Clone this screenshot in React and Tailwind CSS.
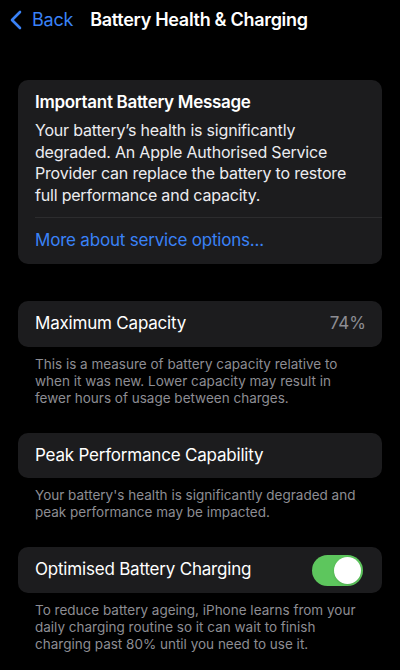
const Card = ({ children, className = '' }) => (
  <div className={`mx-[18px] rounded-[10px] bg-[#1c1c1e] ${className}`}>{children}</div>
);

const Footer = ({ children }) => (
  <p className="mx-[35px] mt-[9px] pr-1 text-[13.5px] leading-[17px] text-[#8d8d93]">{children}</p>
);

export default function App() {
  return (
    <div
      className="w-[400px] h-[670px] overflow-hidden bg-black text-white antialiased"
      style={{ fontFamily: 'Inter, "Noto Sans", sans-serif' }}
    >
      {/* Nav bar */}
      <div className="flex items-center h-[38px] pt-[1px]">
        <div className="flex items-center pl-[9px] text-[#3a82f7]">
          <svg className="w-[14px] h-[20px]" viewBox="0 0 14 20" fill="none" stroke="currentColor">
            <path d="M11 2L3 10l8 8" strokeWidth={2.6} strokeLinecap="round" strokeLinejoin="round" />
          </svg>
          <span className="ml-[9px] text-[18px] tracking-[-0.2px]">Back</span>
        </div>
        <h1 className="ml-[17px] text-[18px] font-semibold tracking-[-0.3px]">Battery Health &amp; Charging</h1>
      </div>

      {/* Important message */}
      <Card className="mt-[42px]">
        <div className="pl-[17px] pr-[14px] pt-[11px] pb-[11px]">
          <h2 className="text-[17px] leading-[22px] font-semibold tracking-[-0.3px]">Important Battery Message</h2>
          <p className="mt-[7px] text-[16px] leading-[21.5px] tracking-[-0.2px] text-[#ececf0]">
            Your battery’s health is significantly degraded. An Apple Authorised Service Provider can replace the
            battery to restore full performance and capacity.
          </p>
        </div>
        <div className="ml-[17px] border-t border-[#2c2c2e]" />
        <div className="px-[17px] h-[46px] flex items-center text-[17px] tracking-[-0.2px] text-[#3a82f7]">
          More about service options...
        </div>
      </Card>

      {/* Maximum capacity */}
      <Card className="mt-[37px] h-[46px] flex items-center justify-between pl-[17px] pr-[16px]">
        <span className="text-[17px] tracking-[-0.2px]">Maximum Capacity</span>
        <span className="text-[17px] text-[#8d8d93]">74%</span>
      </Card>
      <Footer>
        This is a measure of battery capacity relative to when it was new. Lower capacity may result in fewer hours
        of usage between charges.
      </Footer>

      {/* Peak performance */}
      <Card className="mt-[26px] h-[45px] flex items-center pl-[17px]">
        <span className="text-[17px] tracking-[-0.2px]">Peak Performance Capability</span>
      </Card>
      <Footer>Your battery's health is significantly degraded and peak performance may be impacted.</Footer>

      {/* Optimised charging */}
      <Card className="mt-[26px] h-[46px] flex items-center justify-between pl-[17px] pr-[19px]">
        <span className="text-[17px] tracking-[-0.2px]">Optimised Battery Charging</span>
        <div className="w-[51px] h-[31px] rounded-full bg-[#5dc65d] flex items-center justify-end p-[2px]">
          <div className="w-[27px] h-[27px] rounded-full bg-white shadow" />
        </div>
      </Card>
      <Footer>
        To reduce battery ageing, iPhone learns from your daily charging routine so it can wait to finish charging
        past 80% until you need to use it.
      </Footer>
    </div>
  );
}
